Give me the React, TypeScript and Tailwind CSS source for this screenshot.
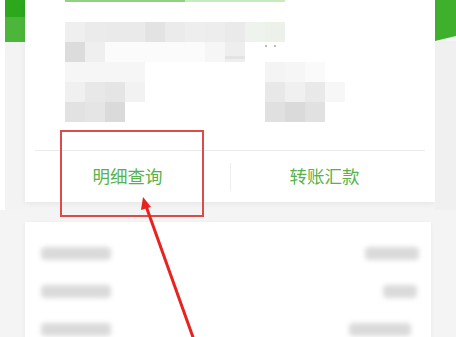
import React from "react";

const rows: { y: number; cells: [number, number, string][] }[] = [
  {
    y: 22,
    cells: [
      [65, 20, "#efefef"], [85, 20, "#ebebeb"], [105, 20, "#eaeaea"], [125, 20, "#eaeaea"],
      [145, 20, "#e3e3e3"], [165, 20, "#ebebeb"], [185, 20, "#eeeeee"], [205, 20, "#ededed"],
      [225, 20, "#eaeaea"], [245, 20, "#eff3ee"], [265, 20, "#ecf1ea"],
    ],
  },
  {
    y: 42,
    cells: [
      [65, 20, "#dcdcdc"], [85, 20, "#efefef"], [105, 100, "#fbfbfb"], [205, 20, "#f6f6f6"], [225, 20, "#eeeeee"],
    ],
  },
  {
    y: 62,
    cells: [[65, 80, "#f6f6f6"], [265, 20, "#f4f4f4"], [285, 20, "#f6f6f6"], [305, 20, "#fafafa"]],
  },
  {
    y: 82,
    cells: [
      [65, 20, "#f0f0f0"], [85, 20, "#e8e8e8"], [105, 20, "#e5e5e5"], [125, 20, "#f2f2f2"],
      [265, 20, "#e8e8e8"], [285, 20, "#f0f0f0"], [305, 20, "#e9e9e9"], [325, 20, "#f7f7f7"],
    ],
  },
  {
    y: 102,
    cells: [
      [65, 20, "#e2e2e2"], [85, 20, "#e5e5e5"], [105, 20, "#dadada"],
      [265, 20, "#e0e0e0"], [285, 20, "#dadada"], [305, 20, "#e1e1e1"],
    ],
  },
];

function Mosaic() {
  return (
    <svg width="410" height="130" viewBox="25 0 410 130" className="block">
      <rect x="65" y="0" width="120" height="2" fill="#8fd27f" />
      <rect x="185" y="0" width="100" height="2" fill="#c8ecc0" />
      {rows.map((r) =>
        r.cells.map(([x, w, c], i) => (
          <rect key={r.y + "-" + i} x={x} y={r.y} width={w} height="20" fill={c} />
        ))
      )}
      <rect x="225" y="56" width="20" height="3" fill="#dcdcdc" opacity="0.6" />
      <circle cx="266" cy="46" r="0.9" fill="#9a9a9a" />
      <circle cx="275" cy="46" r="0.9" fill="#9a9a9a" />
    </svg>
  );
}

function Blur({ w }: { w: number }) {
  return <div className="h-[13px] rounded-sm bg-[#dadada] blur-[2.5px]" style={{ width: w }} />;
}

export default function App() {
  return (
    <div
      className="relative w-[456px] h-[337px] overflow-hidden bg-[#f4f4f4]"
      style={{ fontFamily: '"Noto Sans CJK SC", "Noto Sans", sans-serif' }}
    >
      <div className="flex h-[210px]">
        <div className="w-[5px] bg-white" />
        <div className="w-[20px] flex flex-col">
          <div className="h-[17px] bg-[#2da71b]" />
          <div className="h-[25px] bg-[#4cb63b]" />
          <div className="flex-1 bg-[#f3f3f3]" />
        </div>
        <div className="w-[410px] h-[202px] bg-white flex flex-col shadow-[0_2px_6px_rgba(0,0,0,0.06)]">
          <Mosaic />
          <div className="mx-[10px] mt-[20px] h-px bg-[#ebebeb]" />
          <div className="mx-[10px] flex flex-1 items-center">
            <div className="w-[195px] flex justify-center text-[17.5px] text-[#58b24a] pr-[10px]">明细查询</div>
            <div className="w-px h-[28px] bg-[#eeeeee]" />
            <div className="flex-1 flex justify-center text-[17.5px] text-[#58b24a] pr-[7px]">转账汇款</div>
          </div>
        </div>
        <div className="flex-1 flex flex-col">
          <div
            className="h-[41px] bg-[#3fb02c]"
            style={{ clipPath: "polygon(0 0, 100% 0, 100% 88%, 0 100%)" }}
          />
          <div className="flex-1 bg-[#f0f0f0]" />
        </div>
      </div>

      <div className="ml-[25px] w-[406px] mt-[12px] h-[200px] bg-white shadow-[0_1px_4px_rgba(0,0,0,0.05)] flex flex-col gap-[24px] pt-[24px] pl-[16px] pr-[12px]">
        <div className="flex justify-between items-center h-[14px]">
          <Blur w={70} />
          <Blur w={54} />
        </div>
        <div className="flex justify-between items-center h-[14px]">
          <Blur w={70} />
          <div className="w-[34px] mr-[2px]"><Blur w={34} /></div>
        </div>
        <div className="flex justify-between items-center h-[14px]">
          <Blur w={70} />
          <div className="mr-[8px]"><Blur w={62} /></div>
        </div>
      </div>

      <div className="absolute left-[60px] top-[130px] w-[144px] h-[87px] border-2 border-[#dd4a4a]" />

      <svg className="absolute left-0 top-0" width="456" height="337">
        <line x1="194" y1="340" x2="146" y2="206" stroke="#e8221f" strokeWidth="3" />
        <polygon points="143,197 141,210 151,207" fill="#e8221f" />
      </svg>
    </div>
  );
}
